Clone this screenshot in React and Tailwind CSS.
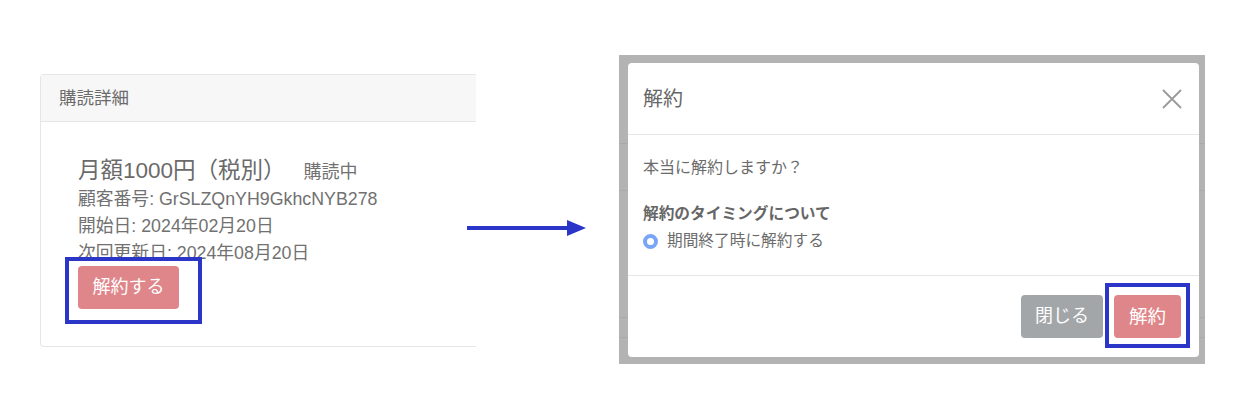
const font = { fontFamily: '"Liberation Sans", "Noto Sans CJK JP", sans-serif' }

function SubscriptionCard() {
  return (
    <div className="relative ml-[40px] mt-[74px] w-[436px] h-[273px] shrink-0 border border-r-0 border-[#e6e6e6] rounded-l bg-white">
      {/* Header */}
      <div className="h-[47px] bg-[#f7f7f7] border-b border-[#e6e6e6] pl-[18px] flex items-center text-[17.5px] text-[#6b6b6b]">
        購読詳細
      </div>

      {/* Body */}
      <div className="pl-[37px] pt-[34px] text-[#717171]">
        <div className="flex items-baseline">
          <span className="text-[22.5px] leading-[30px] text-[#6a6a6a]">月額1000円（税別）</span>
          <span className="ml-[18px] text-[18px]">購読中</span>
        </div>
        <p className="text-[17.8px] leading-[27px]">顧客番号: GrSLZQnYH9GkhcNYB278</p>
        <p className="text-[17.8px] leading-[27px]">開始日: 2024年02月20日</p>
        <p className="text-[17.8px] leading-[27px] -mb-[1px]">次回更新日: 2024年08月20日</p>
        <button className="w-[101px] h-[43px] rounded bg-[#df868a] text-white text-[18px]">
          解約する
        </button>
      </div>

      {/* Annotation box */}
      <div className="absolute left-[24px] top-[182px] w-[137px] h-[67px] border-[4px] border-[#2b35c8]" />
    </div>
  )
}

function CancelModal() {
  return (
    <div className="ml-[143px] mt-[55px] w-[586px] h-[309px] shrink-0 bg-[#b3b3b3] pl-[9px] pr-[6px] pt-[8px] pb-[7px] relative">
      {/* faint page lines behind the backdrop */}
      <div className="absolute left-0 right-0 top-[88px] h-px bg-[#a9a9a9]" />
      <div className="absolute left-0 right-0 top-[135px] h-px bg-[#a9a9a9]" />
      <div className="absolute left-0 right-0 top-[262px] h-px bg-[#a9a9a9]" />
      <div className="absolute left-0 right-0 top-[282px] h-px bg-[#a9a9a9]" />

      <div className="relative h-full bg-white rounded flex flex-col">
        {/* Header */}
        <div className="h-[72px] border-b border-[#e6e6e6] flex items-center justify-between pl-[15px] pr-[16px]">
          <span className="text-[20px] text-[#666]">解約</span>
          <svg className="w-[22px] h-[22px]" viewBox="0 0 22 22" fill="none" stroke="#9a9a9a" strokeWidth="1.8">
            <path d="M2 2L20 20M20 2L2 20" />
          </svg>
        </div>

        {/* Body */}
        <div className="h-[141px] border-b border-[#e6e6e6] pl-[15px] pt-[21px] text-[#6b6b6b]">
          <p className="text-[16px] leading-[24px]">本当に解約しますか？</p>
          <p className="mt-[22px] text-[15.7px] leading-[24px] font-bold text-[#666]">解約のタイミングについて</p>
          <div className="flex items-center mt-[3px]">
            <span className="w-[15px] h-[15px] rounded-full border-[4.5px] border-[#7aa4f6] bg-white" />
            <span className="ml-[9px] text-[15.7px] leading-[24px]">期間終了時に解約する</span>
          </div>
        </div>

        {/* Footer */}
        <div className="flex-1 flex items-center justify-end gap-[11px] pr-[18px]">
          <button className="w-[82px] h-[43px] rounded bg-[#a3a6a9] text-white text-[18px]">閉じる</button>
          <button className="w-[67px] h-[43px] rounded bg-[#df868a] text-white text-[18.5px]">解約</button>
        </div>

        {/* Annotation box */}
        <div className="absolute left-[477px] top-[220px] w-[85px] h-[65px] border-[4px] border-[#2b35c8]" />
      </div>
    </div>
  )
}

export default function App() {
  return (
    <div className="relative w-[1238px] h-[416px] bg-white flex items-start" style={font}>
      <SubscriptionCard />
      <CancelModal />

      {/* Arrow */}
      <svg className="absolute left-[467px] top-[219px]" width="119" height="18" viewBox="0 0 119 18">
        <rect x="0" y="7" width="102" height="4" fill="#2b35c8" />
        <polygon points="100,1 119,9 100,17" fill="#2b35c8" />
      </svg>
    </div>
  )
}
